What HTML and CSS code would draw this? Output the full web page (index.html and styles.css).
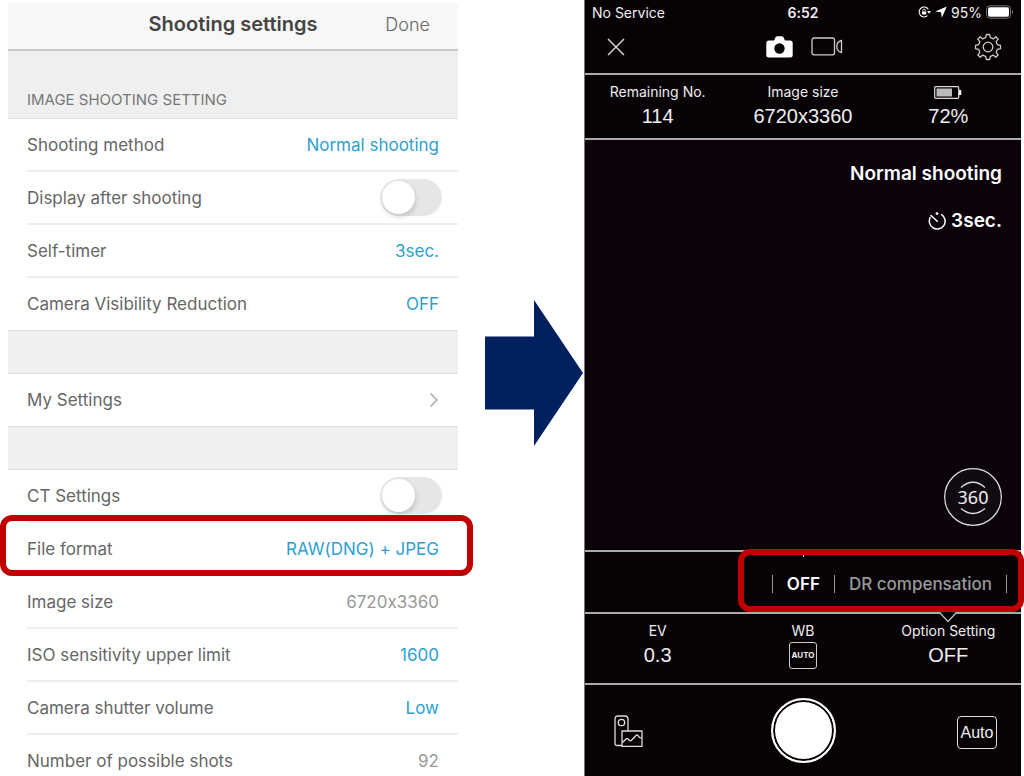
FILE: index.html
```html
<!DOCTYPE html>
<html lang="en">
<head>
    <meta charset="UTF-8">
    <meta name="viewport" content="width=device-width, initial-scale=1.0">
    <title>Shooting settings</title>
    <link rel="stylesheet" href="styles.css">
</head>
<body>
    <main class="page">
        <section class="settings">
            <header class="settings-header">
                <h1>Shooting settings</h1>
                <button class="done">Done</button>
            </header>
            <h2 class="section-title">IMAGE SHOOTING SETTING</h2>
            <div class="group">
                <button class="row"><span>Shooting method</span><span class="value">Normal shooting</span></button>
                <div class="row">
                    <label for="display-after">Display after shooting</label>
                    <input type="checkbox" class="toggle" id="display-after">
                </div>
                <button class="row"><span>Self-timer</span><span class="value">3sec.</span></button>
                <button class="row"><span>Camera Visibility Reduction</span><span class="value">OFF</span></button>
            </div>
            <div class="spacer"></div>
            <div class="group">
                <button class="row">
                    <span>My Settings</span>
                    <svg class="chevron" width="10" height="16" viewBox="0 0 10 16"><path d="M1.500 1.500 8 8l-6.500 6.500"/></svg>
                </button>
            </div>
            <div class="spacer"></div>
            <div class="group">
                <div class="row">
                    <label for="ct-settings">CT Settings</label>
                    <input type="checkbox" class="toggle" id="ct-settings">
                </div>
                <button class="row highlighted"><span>File format</span><span class="value">RAW(DNG) + JPEG</span></button>
                <div class="row"><span>Image size</span><span class="value muted">6720x3360</span></div>
                <button class="row"><span>ISO sensitivity upper limit</span><span class="value">1600</span></button>
                <button class="row"><span>Camera shutter volume</span><span class="value">Low</span></button>
                <div class="row"><span>Number of possible shots</span><span class="value muted">92</span></div>
            </div>
        </section>

        <div class="arrow">
            <svg width="98" height="146" viewBox="0 0 98 146"><path d="M0 36.500h49V0l49 73-49 73v-36.500H0z" fill="#002060"/></svg>
        </div>

        <section class="camera">
            <div class="status-bar">
                <span>No Service</span>
                <span class="clock">6:52</span>
                <span class="status-icons">
                    <svg width="13" height="12" viewBox="0 0 13 12">
                        <path d="M10.300 3.200A5 5 0 1 0 9.500 9.700" fill="none" stroke="#fff" stroke-width="1.100"/>
                        <path d="M9 5h4l-2 2.800z" fill="#fff"/>
                        <rect x="4" y="5.400" width="4.200" height="3" rx=".4" fill="#fff"/>
                        <path d="M4.900 5.500V4.300a1.200 1.200 0 0 1 2.400 0v1.200" fill="none" stroke="#fff" stroke-width=".8"/>
                    </svg>
                    <svg width="12" height="12" viewBox="0 0 12 12"><path d="M11.700.5 6.900 11.700 6 6.200.3 5.500z" fill="#fff"/></svg>
                    <span>95%</span>
                    <svg width="28" height="14" viewBox="0 0 28 14">
                        <rect x=".5" y=".8" width="24" height="12.400" rx="3.500" fill="none" stroke="#777"/>
                        <rect x="2" y="2.300" width="21" height="9.400" rx="2" fill="#fff"/>
                        <path d="M26 5v4c1.600-.7 1.600-3.300 0-4z" fill="#777"/>
                    </svg>
                </span>
            </div>

            <nav class="camera-nav">
                <button class="nav-left" aria-label="Close">
                    <svg width="18" height="18" viewBox="0 0 18 18"><path d="m1 1 16 16M17 1 1 17" fill="none" stroke="#ddd" stroke-width="1.400"/></svg>
                </button>
                <div class="modes">
                    <button aria-label="Photo">
                        <svg width="27" height="22" viewBox="0 0 27 22">
                            <path fill="#fff" fill-rule="evenodd" d="M3 4.500h5L9.500 1.300Q10 .3 11.200.3h4.600q1.200 0 1.700 1L19 4.500h5q2.700 0 2.700 2.500v12q0 2.500-2.700 2.500H3Q.3 21.500.3 19V7Q.3 4.500 3 4.500zM13.500 7.300a5.200 5.200 0 1 0 0 10.400 5.200 5.200 0 0 0 0-10.400z"/>
                        </svg>
                    </button>
                    <button aria-label="Video">
                        <svg width="32" height="19" viewBox="0 0 32 19" fill="none" stroke="#ccc" stroke-width="1.300">
                            <rect x="1" y="1" width="22.500" height="16.800" rx="2"/>
                            <path d="M30.500 3.500v12c-2.500-.6-4.700-2.700-4.700-6s2.200-5.400 4.700-6z"/>
                        </svg>
                    </button>
                </div>
                <button class="nav-right" aria-label="Settings">
                    <svg width="28" height="28" viewBox="0 0 28 28" fill="none" stroke="#ccc" stroke-width="1.300" stroke-linejoin="round">
                        <circle cx="14" cy="14" r="4.800"/>
                        <path d="M12.300 1.500h3.400l.6 3.200q1.500.4 3 1.200l2.500-2.100 2.400 2.400-2.100 2.500q.8 1.500 1.200 3l3.200.6v3.400l-3.200.6q-.4 1.500-1.200 3l2.100 2.500-2.400 2.400-2.500-2.100q-1.500.8-3 1.200l-.6 3.200h-3.400l-.6-3.200q-1.500-.4-3-1.200l-2.500 2.100-2.400-2.400 2.100-2.500q-.8-1.500-1.200-3l-3.200-.6v-3.400l3.200-.6q.4-1.500 1.200-3L3.800 6.200l2.400-2.400 2.500 2.100q1.500-.8 3-1.200z"/>
                    </svg>
                </button>
            </nav>

            <div class="info">
                <div class="cell"><span>Remaining No.</span><span class="number">114</span></div>
                <div class="cell"><span>Image size</span><span class="number">6720x3360</span></div>
                <div class="cell">
                    <svg class="battery" width="28" height="13" viewBox="0 0 28 13">
                        <rect x=".7" y=".7" width="24" height="11.600" rx="1" fill="none" stroke="#ddd" stroke-width="1.200"/>
                        <rect x="2.500" y="2.500" width="15.500" height="8" fill="#bbb"/>
                        <path d="M25 4h2.300v5H25z" fill="#fff"/>
                    </svg>
                    <span class="number">72%</span>
                </div>
            </div>

            <div class="viewfinder">
                <span>Normal shooting</span>
                <span class="timer">
                    <svg width="18" height="18" viewBox="0 0 18 18" fill="none" stroke="#fff" stroke-width="1.500" stroke-linecap="round">
                        <path d="M2.200 5.500a7.900 7.900 0 1 0 11.500-2.900M3 3.500l6.300 5.800"/>
                        <circle cx="9" cy="1.600" r="1.400" fill="#fff" stroke="none"/>
                    </svg>
                    3sec.
                </span>
                <button class="view-360" aria-label="360">
                    <svg width="58" height="58" viewBox="0 0 58 58" fill="none" stroke="#ddd" stroke-width="1.300">
                        <circle cx="29" cy="29" r="28.300" fill="#110b11"/>
                        <path d="M17 19.500q12-10.500 24 0M17 40.500q12 10 24 0"/>
                        <text x="29" y="36" text-anchor="middle" fill="#eee" stroke="none">360</text>
                    </svg>
                </button>
            </div>

            <div class="options">
                <button class="option active">OFF</button>
                <button class="option">DR compensation</button>
            </div>

            <div class="params">
                <button class="cell"><span>EV</span><span class="number">0.3</span></button>
                <button class="cell"><span>WB</span><span class="wb-auto">AUTO</span></button>
                <button class="cell">
                    <svg class="notch" width="18" height="11" viewBox="0 0 18 11"><path d="M1 0v1l8 8.500L17 1V0" fill="#060206" stroke="#bbb" stroke-width="1.300"/></svg>
                    <span>Option Setting</span><span class="number">OFF</span>
                </button>
            </div>

            <footer class="shutter-bar">
                <button class="gallery" aria-label="Gallery">
                    <svg width="29" height="32" viewBox="0 0 29 32" fill="none" stroke="#ddd" stroke-width="1.300" stroke-linejoin="round">
                        <path d="M8 30.500H3Q1 30.500 1 28.500V4q0-3 3-3h7q3 0 3 3v12"/>
                        <circle cx="7.500" cy="7.500" r="3.200"/>
                        <rect x="8" y="16" width="20" height="15.300"/>
                        <path d="m8.500 27.500 3.500-3.500q1-1 2 0l1.500 1.500q1 .8 2-.2l4.500-4.800q1-1 2 0l1 1.500q.8 1 2.500.8"/>
                    </svg>
                </button>
                <button class="shutter" aria-label="Shutter"></button>
                <button class="auto">Auto</button>
            </footer>
        </section>
    </main>
</body>
</html>
```
FILE: styles.css
```css
* {
    box-sizing: border-box;
}

body {
    margin: 0;
    background-color: #fff;
    font-family: Inter, "Liberation Sans", sans-serif;
    /* keeps the plain x in 6720x3360 */
    font-feature-settings: "calt" 0;
}

button {
    padding: 0;
    border: none;
    background: none;
    color: inherit;
    font: inherit;
    font-feature-settings: inherit;
    cursor: pointer;
}

svg {
    display: block;
}

.page {
    display: grid;
    grid-template-rows: 100%;
    grid-template-columns: 450fr 126fr 437fr;
    height: 100vh;
    padding: 0 3px 0 8px;
    overflow: hidden;
}

/* settings list */
.settings {
    padding-top: 3px;
    color: #666;
    font-size: 17px;
}

.settings-header {
    display: grid;
    grid-template-columns: 1fr auto 1fr;
    align-items: center;
    height: 48px;
    padding: 0 28px 4px;
    border-bottom: 2px solid #c8c8c8;
    background-color: #f7f7f7;
}

.settings-header h1 {
    grid-column: 2;
    margin: 0;
    color: #444;
    font-size: 20px;
    font-weight: 600;
}

.done {
    justify-self: end;
    font-size: 18px;
    font-weight: 300;
}

.section-title {
    margin: 0;
    padding: 38px 19px 7px;
    border-bottom: 1px solid #e2e2e2;
    background-color: #efefef;
    color: #777;
    font-size: 15px;
    font-weight: 400;
    line-height: 22px;
}

.row {
    position: relative;
    display: flex;
    justify-content: space-between;
    align-items: center;
    width: calc(100% - 19px);
    height: 53px;
    margin-left: 19px;
    padding-right: 19px;
    border-bottom: 2px solid #eee;
    text-align: left;
}

.group .row:last-child {
    height: 52px;
    border-bottom: none;
}

.value {
    color: #2d9fd0;
}

.value.muted {
    color: #999;
}

.spacer {
    height: 44px;
    border: solid #e0e0e0;
    border-width: 1px 0;
    background-color: #efefef;
}

.chevron path {
    fill: none;
    stroke: #bbb;
    stroke-width: 2;
}

.toggle {
    width: 62px;
    height: 37px;
    margin: 0 -3px 0 0;
    padding: 2px;
    border-radius: 19px;
    background-color: #e6e6e8;
    appearance: none;
    cursor: pointer;
}

.toggle::before {
    content: "";
    display: block;
    width: 33px;
    height: 33px;
    border-radius: 50%;
    background-color: #fff;
    box-shadow: 1px 3px 5px rgba(0, 0, 0, 0.15);
}

.toggle:checked {
    background-color: #2d9fd0;
}

.toggle:checked::before {
    margin-left: auto;
}

.highlighted::after,
.options::after {
    content: "";
    position: absolute;
    border: 6px solid #c00000;
    border-radius: 12px;
}

.highlighted::after {
    inset: -8px -15px -2px -27px;
}

/* arrow between the two screens */
.arrow {
    display: flex;
    justify-content: flex-end;
    align-items: flex-start;
    padding: 300px 1px 0 0;
}

/* camera screen */
.camera {
    display: flex;
    flex-direction: column;
    border-left: 1px solid #777;
    background-color: #060206;
    color: #eee;
    font-size: 14px;
}

.status-bar {
    display: grid;
    grid-template-columns: 1fr auto 1fr;
    align-items: center;
    height: 24px;
    padding: 0 7px;
}

.clock {
    font-weight: 600;
}

.status-icons {
    display: flex;
    justify-content: flex-end;
    align-items: center;
    gap: 4px;
}

.camera-nav {
    display: grid;
    grid-template-columns: 1fr auto 1fr;
    align-items: center;
    height: 51px;
    padding: 0 19px 4px 22px;
    border-bottom: 2px solid #aaa;
}

.nav-left {
    justify-self: start;
}

.nav-right {
    justify-self: end;
}

.modes {
    display: flex;
    align-items: center;
    gap: 18px;
}

.info,
.params {
    display: grid;
    grid-template-columns: repeat(3, 1fr);
}

.info {
    height: 65px;
    border-bottom: 2px solid #aaa;
}

.cell {
    position: relative;
    display: flex;
    flex-direction: column;
    align-items: center;
    padding-top: 7px;
    line-height: 20px;
}

.number {
    font-family: "Liberation Sans", Arial, sans-serif;
    font-size: 20px;
    line-height: 28px;
}

.battery {
    margin: 4px 0 3px;
}

.viewfinder {
    display: flex;
    flex: 1;
    flex-direction: column;
    align-items: flex-end;
    padding: 22px 19px 24px;
    background-color: #0b020a;
    color: #fff;
    font-size: 19px;
    font-weight: 600;
    line-height: 24px;
}

.timer {
    display: flex;
    align-items: center;
    gap: 5px;
    margin-top: 23px;
}

.view-360 {
    margin-top: auto;
    font-family: "Noto Sans", sans-serif;
    font-size: 18px;
    font-weight: 400;
}

.options {
    position: relative;
    display: flex;
    justify-content: flex-end;
    align-items: center;
    height: 64px;
    padding: 4px 14px 0 0;
    border: solid #aaa;
    border-width: 2px 0;
}

.options::before {
    content: "";
    position: absolute;
    top: 3px;
    left: 50%;
    z-index: 1;
    width: 1px;
    height: 2px;
    background-color: #ddd;
}

.options::after {
    inset: -3px -3px 0 35%;
}

.option {
    padding: 0 14px;
    border-left: 1px solid #999;
    color: #999;
    font-size: 17px;
    font-weight: 500;
    line-height: 18px;
}

.option:last-child {
    border-right: 1px solid #999;
}

.option.active {
    color: #fff;
    font-weight: 600;
}

.params {
    height: 71px;
    border-bottom: 2px solid #aaa;
}

.notch {
    position: absolute;
    top: -2px;
}

.wb-auto {
    width: 28px;
    margin-top: 1px;
    border: 1px solid #ccc;
    border-radius: 3px;
    font-size: 8px;
    font-weight: 700;
    line-height: 25px;
    text-align: center;
}

.shutter-bar {
    display: grid;
    grid-template-columns: 1fr auto 1fr;
    align-items: center;
    height: 91px;
    padding: 0 24px;
}

.gallery {
    justify-self: start;
    padding-left: 5px;
}

.shutter {
    width: 65px;
    height: 65px;
    border: 2px solid #fff;
    border-radius: 50%;
    background-color: #fff;
    box-shadow: inset 0 0 0 2px #060206;
}

.auto {
    justify-self: end;
    width: 40px;
    height: 33px;
    margin-top: 4px;
    border: 1px solid #ddd;
    border-radius: 4px;
    font-family: "Liberation Sans", Arial, sans-serif;
    font-size: 16px;
}
```
